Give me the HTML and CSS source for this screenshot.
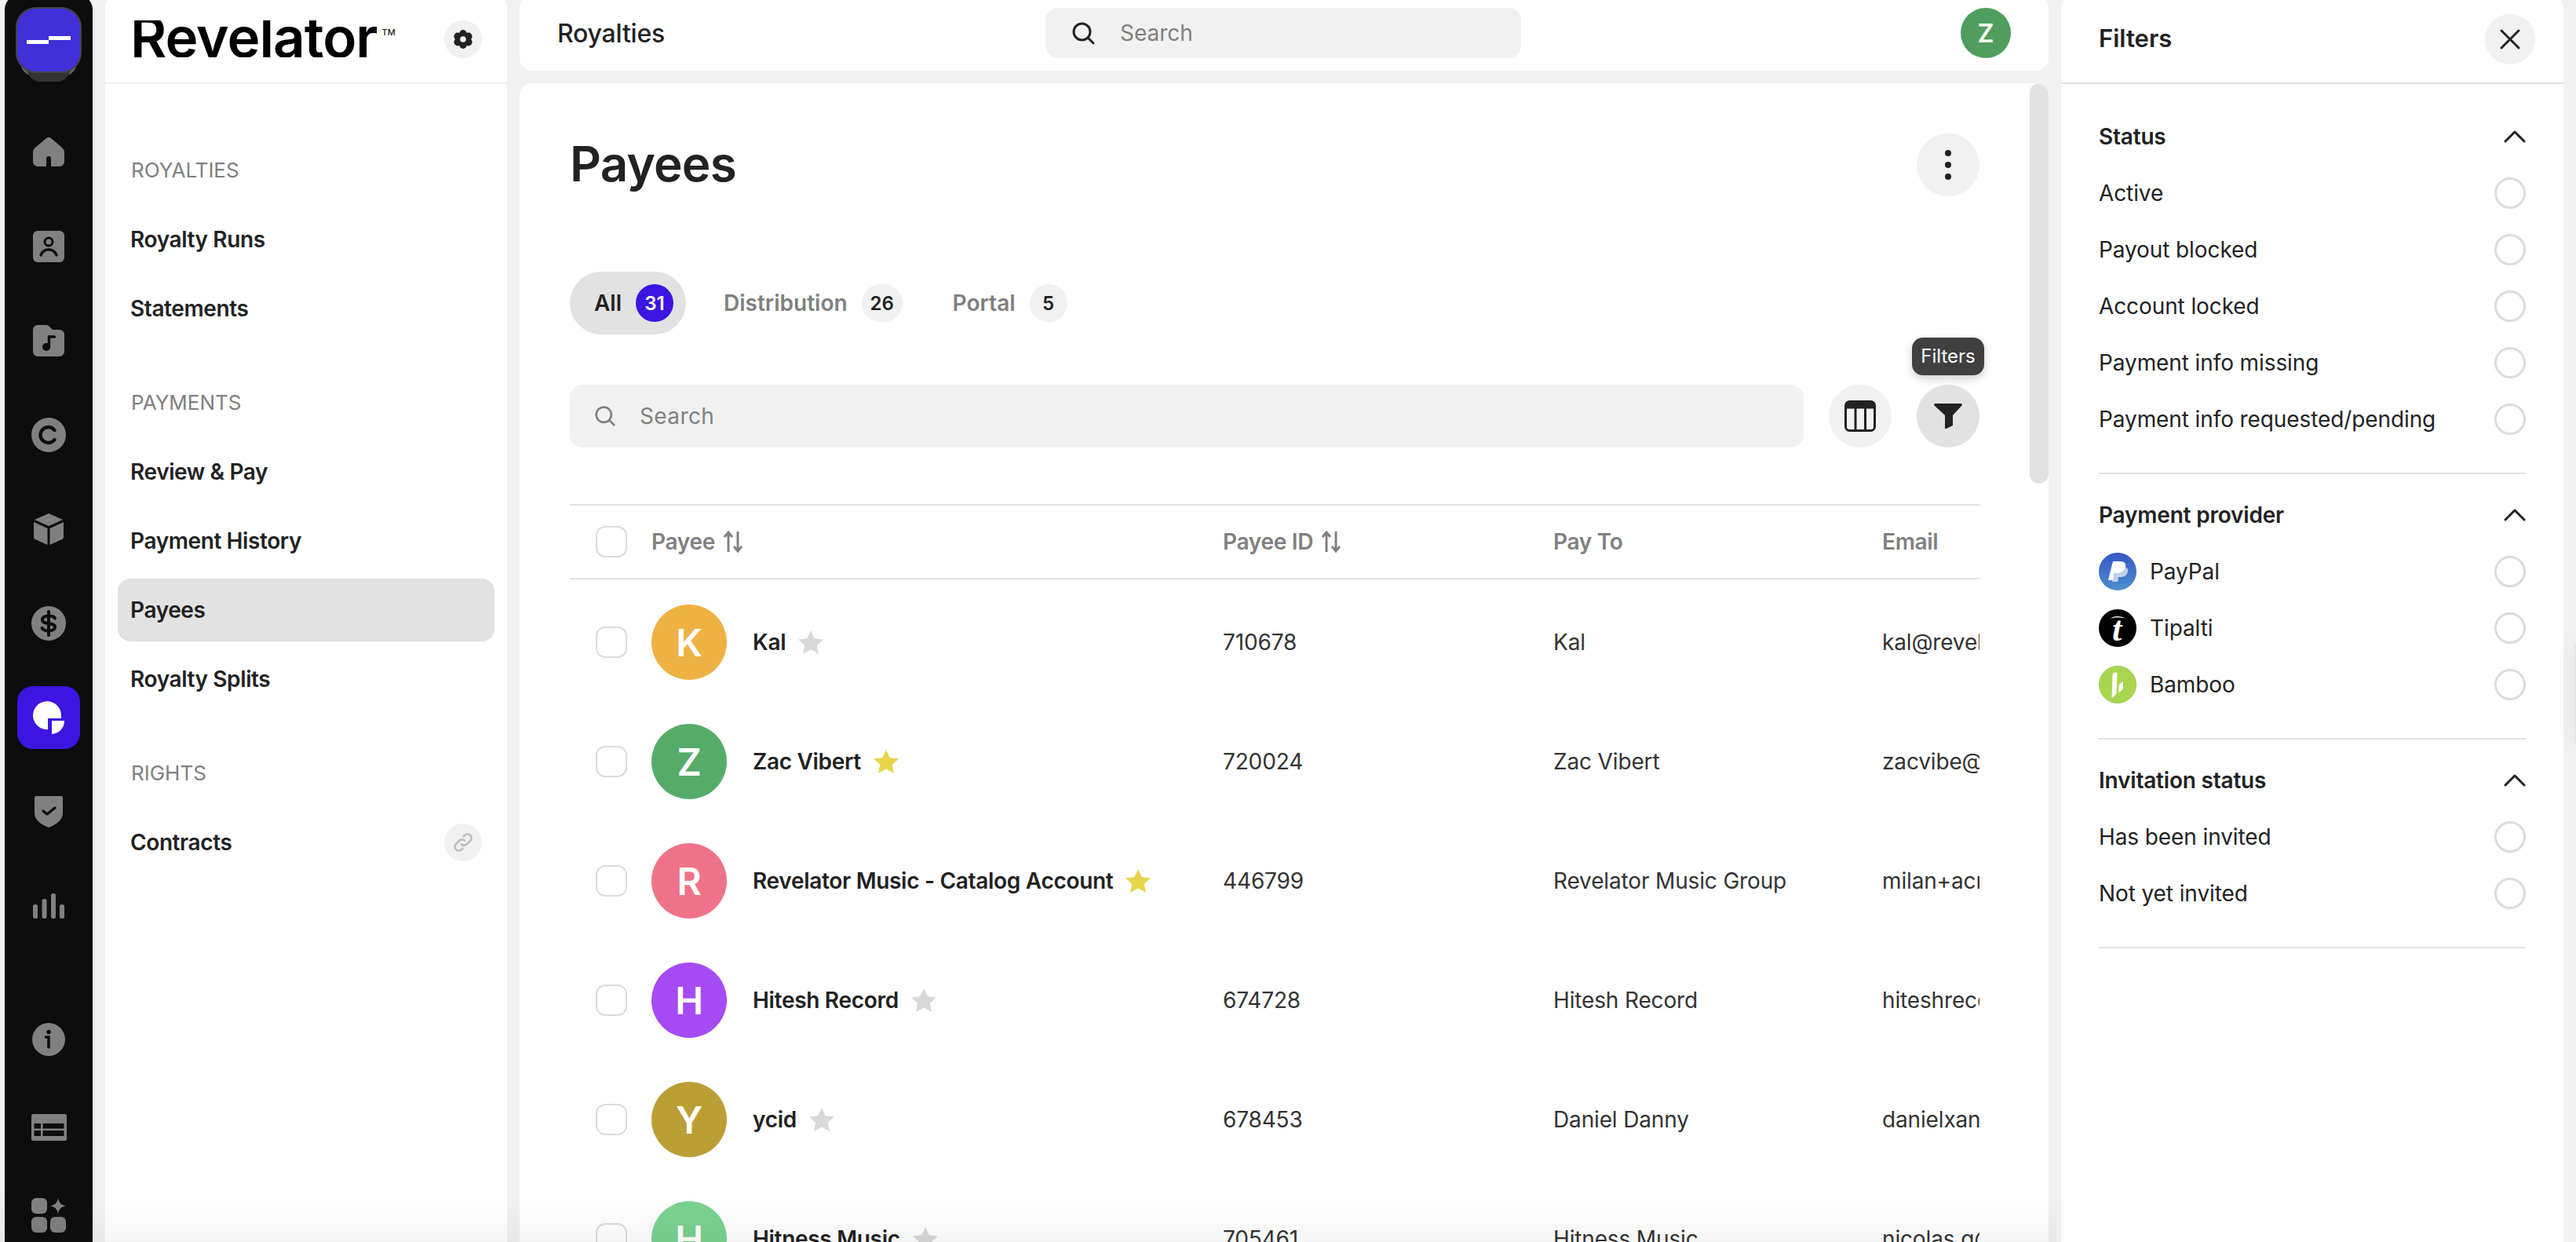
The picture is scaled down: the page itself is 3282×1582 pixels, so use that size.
FILE: index.html
```html
<!DOCTYPE html>
<html lang="en">
<head>
    <meta charset="UTF-8">
    <title>Payees - Revelator</title>
    <link rel="stylesheet" href="styles.css">
</head>
<body>
    <div class="app">
        <!-- Dark icon rail -->
        <aside class="rail">
            <div class="brand">
                <div class="brand-mark">
                    <svg width="56" height="10" viewBox="0 0 56 10"><path d="M0 5h28v5H0zM28 0h28v5H28z" fill="#fff"/></svg>
                </div>
            </div>
            <div class="rail-item">
                <svg class="rail-icon" width="40" height="38" viewBox="0 0 40 38"><path d="M16.5 1.5a5 5 0 0 1 7 0L37 13a8 8 0 0 1 3 6v12a6 6 0 0 1-6 6H23V27a3 3 0 0 0-6 0v10H6a6 6 0 0 1-6-6V19a8 8 0 0 1 3-6z"/></svg>
            </div>
            <div class="rail-item">
                <svg class="rail-icon" width="40" height="40" viewBox="0 0 40 40"><rect width="40" height="40" rx="6"/><circle cx="20" cy="14" r="5" fill="none" stroke="#0d0d0d" stroke-width="3"/><path d="M10 31c2-5 6-7 10-7s8 2 10 7" fill="none" stroke="#0d0d0d" stroke-width="3.4" stroke-linecap="round"/></svg>
            </div>
            <div class="rail-item">
                <svg class="rail-icon" width="40" height="40" viewBox="0 0 40 40"><path d="M6 0h11a6 6 0 0 1 4 2l4 4h9a6 6 0 0 1 6 6v22a6 6 0 0 1-6 6H6a6 6 0 0 1-6-6V6a6 6 0 0 1 6-6z"/><circle cx="17" cy="28" r="5" fill="#0d0d0d"/><path d="M20.5 28V15h7" fill="none" stroke="#0d0d0d" stroke-width="3.4" stroke-linecap="round"/></svg>
            </div>
            <div class="rail-item">
                <svg class="rail-icon" width="44" height="44" viewBox="0 0 44 44"><circle cx="22" cy="22" r="22"/><path d="M29.5 16a10 10 0 1 0 0 12" fill="none" stroke="#0d0d0d" stroke-width="4.4" stroke-linecap="round"/></svg>
            </div>
            <div class="rail-item">
                <svg class="rail-icon" width="38" height="40" viewBox="0 0 38 40"><path d="M19 0l18 8-18 8L1 8zM0 11l17.500 8v21L2 33a3 3 0 0 1-2-3zM38 11l-17.500 8v21L36 33a3 3 0 0 0 2-3z"/></svg>
            </div>
            <div class="rail-item">
                <svg class="rail-icon" width="44" height="44" viewBox="0 0 44 44"><circle cx="22" cy="22" r="22"/><path d="M30 15.500c-1-2-4-3-8-3-5 0-8 2-8 5 0 7 16 2.500 16 9 0 3-3 5-8 5-4 0-7-1-8.500-3.500M22 7v30" fill="none" stroke="#0d0d0d" stroke-width="4" stroke-linecap="round"/></svg>
            </div>
            <div class="rail-item">
                <div class="rail-active">
                    <svg width="40" height="42" viewBox="0 0 40 42"><path d="M36 22H19v14.200A18 18 0 1 1 36 18z" fill="#fff"/><path d="M24 25h16a16.500 16.500 0 0 1-16 17z" fill="#fff"/></svg>
                </div>
            </div>
            <div class="rail-item">
                <svg class="rail-icon" width="36" height="40" viewBox="0 0 36 40"><path d="M2 0h32a2 2 0 0 1 2 2v20c0 8-8 14-18 18C8 36 0 30 0 22V2a2 2 0 0 1 2-2z"/><path d="M11 19l5 4 10-8" fill="none" stroke="#0d0d0d" stroke-width="3.4" stroke-linecap="round" stroke-linejoin="round"/></svg>
            </div>
            <div class="rail-item">
                <svg class="rail-icon" width="40" height="32" viewBox="0 0 40 32"><rect y="14" width="6" height="18" rx="2.500"/><rect x="11.500" y="7" width="6" height="25" rx="2.500"/><rect x="23" width="6" height="32" rx="2.500"/><rect x="34" y="14" width="6" height="18" rx="2.500"/></svg>
            </div>
            <div class="rail-bottom">
                <div class="rail-item rail-item-small">
                    <svg class="rail-icon" width="42" height="42" viewBox="0 0 42 42"><circle cx="21" cy="21" r="21"/><circle cx="21" cy="11.500" r="2.800" fill="#0d0d0d"/><path d="M17.500 18H21v13" fill="none" stroke="#0d0d0d" stroke-width="3.600" stroke-linecap="round"/></svg>
                </div>
                <div class="rail-item rail-item-small">
                    <svg class="rail-icon" width="45" height="34" viewBox="0 0 45 34"><rect width="45" height="34" rx="2"/><path d="M3.500 12h8.500v6.500H3.500zM14.500 12H41.500v6.500H14.500zM3.500 21h8.500v7H3.500zM14.500 21H41.500v7H14.500z" fill="#0d0d0d"/></svg>
                </div>
                <div class="rail-item rail-item-small">
                    <svg class="rail-icon" width="44" height="44" viewBox="0 0 44 44"><rect width="20" height="20" rx="6"/><rect y="24" width="20" height="20" rx="6"/><rect x="24" y="24" width="20" height="20" rx="6"/><path d="M34 0c1 6 4 9 10 10-6 1-9 4-10 10-1-6-4-9-10-10 6-1 9-4 10-10z"/></svg>
                </div>
            </div>
        </aside>

        <!-- Section navigation -->
        <nav class="nav">
            <div class="nav-head">
                <div class="logo"><span class="logo-word">Revelator</span><span class="logo-tm">TM</span></div>
                <button class="nav-round">
                    <svg width="24" height="24" viewBox="0 0 24 24"><g fill="#222"><circle cx="12" cy="4.800" r="4.800"/><circle cx="12" cy="19.200" r="4.800"/><circle cx="5.200" cy="8.400" r="4.800"/><circle cx="18.800" cy="8.400" r="4.800"/><circle cx="5.200" cy="15.600" r="4.800"/><circle cx="18.800" cy="15.600" r="4.800"/></g><circle cx="12" cy="12" r="3.800" fill="#f1f1f1"/></svg>
                </button>
            </div>
            <div class="nav-body">
                <div class="nav-section">
                    <div class="nav-label">ROYALTIES</div>
                    <a class="nav-item">Royalty Runs</a>
                    <a class="nav-item">Statements</a>
                </div>
                <div class="nav-section">
                    <div class="nav-label">PAYMENTS</div>
                    <a class="nav-item">Review &amp; Pay</a>
                    <a class="nav-item">Payment History</a>
                    <a class="nav-item selected">Payees</a>
                    <a class="nav-item">Royalty Splits</a>
                </div>
                <div class="nav-section">
                    <div class="nav-label">RIGHTS</div>
                    <a class="nav-item">Contracts
                        <span class="nav-round">
                            <svg width="26" height="26" viewBox="0 0 24 24" fill="none" stroke="#bdbdbd" stroke-width="2.400" stroke-linecap="round"><path d="M10 14a4.500 4.500 0 0 0 6.500 0l4-4A4.600 4.600 0 0 0 14 3.500l-1.500 1.500"/><path d="M14 10a4.500 4.500 0 0 0-6.500 0l-4 4a4.600 4.600 0 0 0 6.500 6.500l1.500-1.500"/></svg>
                        </span>
                    </a>
                </div>
            </div>
        </nav>

        <main class="main">
            <header class="topbar">
                <div class="topbar-title">Royalties</div>
                <div class="search top-search">
                    <svg width="32" height="32" viewBox="0 0 32 32" fill="none" stroke="#222" stroke-width="3" stroke-linecap="round"><circle cx="14.500" cy="14.500" r="10.500"/><path d="M22 22l7 7"/></svg>
                    <span class="search-text">Search</span>
                </div>
                <div class="user-avatar">Z</div>
            </header>

            <section class="content">
                <div class="scroll-thumb"></div>
                <div class="title-row">
                    <h1>Payees</h1>
                    <button class="round-btn">
                        <svg width="8" height="38" viewBox="0 0 8 38" fill="#222"><circle cx="4" cy="4" r="4"/><circle cx="4" cy="19" r="4"/><circle cx="4" cy="34" r="4"/></svg>
                    </button>
                </div>

                <div class="tabs">
                    <div class="tab active">All <span class="count">31</span></div>
                    <div class="tab">Distribution <span class="count wide">26</span></div>
                    <div class="tab">Portal <span class="count">5</span></div>
                </div>

                <div class="toolbar">
                    <div class="search table-search">
                        <svg width="28" height="28" viewBox="0 0 32 32" fill="none" stroke="#808080" stroke-width="3" stroke-linecap="round"><circle cx="14" cy="14" r="11"/><path d="M22 22l7 7"/></svg>
                        <span class="search-text">Search</span>
                    </div>
                    <button class="round-btn">
                        <svg width="40" height="40" viewBox="0 0 40 40" fill="none" stroke="#222"><rect x="1.500" y="1.500" width="37" height="37" rx="5" stroke-width="3"/><path d="M1.500 6.500h37" stroke-width="8"/><path d="M14 8v30M26.500 8v30" stroke-width="3"/></svg>
                    </button>
                    <button class="round-btn on">
                        <svg width="36" height="32" viewBox="0 0 36 32" fill="#222"><path d="M1.500 0h33a1.500 1.500 0 0 1 1 2.500L24 15v12a2 2 0 0 1-1 1.500L15.500 32a1 1 0 0 1-1.500-1V15L.5 2.500A1.500 1.500 0 0 1 1.500 0z"/></svg>
                        <span class="tooltip">Filters</span>
                    </button>
                </div>

                <div class="table">
                    <div class="table-row table-head">
                        <div class="cell-check"><span class="checkbox"></span></div>
                        <div class="cell-sort">Payee
                            <svg class="sort" width="26" height="28" viewBox="0 0 26 28" fill="none" stroke="#808080" stroke-width="3"><path d="M7 27V3M2 8l5-6 5 6M19 1v24M14 20l5 6 5-6"/></svg>
                        </div>
                        <div class="cell-sort">Payee ID
                            <svg class="sort" width="26" height="28" viewBox="0 0 26 28" fill="none" stroke="#808080" stroke-width="3"><path d="M7 27V3M2 8l5-6 5 6M19 1v24M14 20l5 6 5-6"/></svg>
                        </div>
                        <div>Pay To</div>
                        <div>Email</div>
                    </div>

                    <div class="table-row first">
                        <div class="cell-check"><span class="checkbox"></span></div>
                        <div class="cell-payee"><span class="avatar orange">K</span><span class="payee-name">Kal</span>
                            <svg class="star" width="32" height="30" viewBox="0 0 32 30"><path class="star-off" d="M16 0l4.800 10.200 11.200 1.300-8.300 7.600 2.300 10.900-10-5.600L6 30l2.300-10.900L0 11.500l11.200-1.300z"/></svg>
                        </div>
                        <div>710678</div>
                        <div>Kal</div>
                        <div>kal@revelator.com</div>
                    </div>
                    <div class="table-row">
                        <div class="cell-check"><span class="checkbox"></span></div>
                        <div class="cell-payee"><span class="avatar green">Z</span><span class="payee-name">Zac Vibert</span>
                            <svg class="star" width="32" height="30" viewBox="0 0 32 30"><path class="star-on" d="M16 0l4.800 10.200 11.200 1.300-8.300 7.600 2.300 10.900-10-5.600L6 30l2.300-10.900L0 11.500l11.200-1.300z"/></svg>
                        </div>
                        <div>720024</div>
                        <div>Zac Vibert</div>
                        <div>zacvibe@revelator.com</div>
                    </div>
                    <div class="table-row">
                        <div class="cell-check"><span class="checkbox"></span></div>
                        <div class="cell-payee"><span class="avatar pink">R</span><span class="payee-name">Revelator Music - Catalog Account</span>
                            <svg class="star" width="32" height="30" viewBox="0 0 32 30"><path class="star-on" d="M16 0l4.800 10.200 11.200 1.300-8.300 7.600 2.300 10.900-10-5.600L6 30l2.300-10.900L0 11.500l11.200-1.300z"/></svg>
                        </div>
                        <div>446799</div>
                        <div>Revelator Music Group</div>
                        <div>milan+acr@revelator.com</div>
                    </div>
                    <div class="table-row">
                        <div class="cell-check"><span class="checkbox"></span></div>
                        <div class="cell-payee"><span class="avatar purple">H</span><span class="payee-name">Hitesh Record</span>
                            <svg class="star" width="32" height="30" viewBox="0 0 32 30"><path class="star-off" d="M16 0l4.800 10.200 11.200 1.300-8.300 7.600 2.300 10.900-10-5.600L6 30l2.300-10.900L0 11.500l11.200-1.300z"/></svg>
                        </div>
                        <div>674728</div>
                        <div>Hitesh Record</div>
                        <div>hiteshrecord@revelator.com</div>
                    </div>
                    <div class="table-row">
                        <div class="cell-check"><span class="checkbox"></span></div>
                        <div class="cell-payee"><span class="avatar mustard">Y</span><span class="payee-name">ycid</span>
                            <svg class="star" width="32" height="30" viewBox="0 0 32 30"><path class="star-off" d="M16 0l4.800 10.200 11.200 1.300-8.300 7.600 2.300 10.900-10-5.600L6 30l2.300-10.900L0 11.500l11.200-1.300z"/></svg>
                        </div>
                        <div>678453</div>
                        <div>Daniel Danny</div>
                        <div>danielxan@revelator.com</div>
                    </div>
                    <div class="table-row">
                        <div class="cell-check"><span class="checkbox"></span></div>
                        <div class="cell-payee"><span class="avatar mint">H</span><span class="payee-name">Hitness Music</span>
                            <svg class="star" width="32" height="30" viewBox="0 0 32 30"><path class="star-off" d="M16 0l4.800 10.200 11.200 1.300-8.300 7.600 2.300 10.900-10-5.600L6 30l2.300-10.900L0 11.500l11.200-1.300z"/></svg>
                        </div>
                        <div>705461</div>
                        <div>Hitness Music</div>
                        <div>nicolas.g@revelator.com</div>
                    </div>
                </div>
            </section>
        </main>

        <!-- Filters drawer -->
        <aside class="filters">
            <div class="filters-head">
                <div class="filters-title">Filters</div>
                <button class="close-btn">
                    <svg width="28" height="28" viewBox="0 0 28 28" stroke="#222" stroke-width="3" stroke-linecap="round"><path d="M3 3l22 22M25 3L3 25"/></svg>
                </button>
            </div>
            <div class="filters-body">
                <div class="filter-group">
                    <div class="filter-group-head">Status
                        <svg width="28" height="16" viewBox="0 0 28 16" fill="none" stroke="#222" stroke-width="3" stroke-linecap="round" stroke-linejoin="round"><path d="M2 14L14 2l12 12"/></svg>
                    </div>
                    <div class="filter-option">Active <span class="radio"></span></div>
                    <div class="filter-option">Payout blocked <span class="radio"></span></div>
                    <div class="filter-option">Account locked <span class="radio"></span></div>
                    <div class="filter-option">Payment info missing <span class="radio"></span></div>
                    <div class="filter-option">Payment info requested/pending <span class="radio"></span></div>
                </div>
                <div class="filter-group">
                    <div class="filter-group-head">Payment provider
                        <svg width="28" height="16" viewBox="0 0 28 16" fill="none" stroke="#222" stroke-width="3" stroke-linecap="round" stroke-linejoin="round"><path d="M2 14L14 2l12 12"/></svg>
                    </div>
                    <div class="filter-option">
                        <span class="provider">
                            <svg width="48" height="48" viewBox="0 0 48 48"><defs><linearGradient id="pp" x1="0" y1="0" x2="0" y2="1"><stop offset="0" stop-color="#3557c4"/><stop offset="1" stop-color="#4d8fd0"/></linearGradient></defs><circle cx="24" cy="24" r="24" fill="url(#pp)"/><path d="M23 18h7c5 0 8 2 7 6-1 5-5 7-9 7h-3l-1 6h-7z" fill="#fff" opacity=".65"/><path d="M18 11h9c6 0 8 3 7 7-1 5-6 8-10 8h-4l-2 9h-6z" fill="#fff"/></svg>
                            PayPal
                        </span>
                        <span class="radio"></span>
                    </div>
                    <div class="filter-option">
                        <span class="provider">
                            <svg width="48" height="48" viewBox="0 0 48 48"><circle cx="24" cy="24" r="24" fill="#000"/><path d="M14 12c6-4 14-4 20 0-6-2-14-2-20 0z" fill="#fff"/><text class="tipalti-t" x="23" y="40" text-anchor="middle">t</text></svg>
                            Tipalti
                        </span>
                        <span class="radio"></span>
                    </div>
                    <div class="filter-option">
                        <span class="provider">
                            <svg width="48" height="48" viewBox="0 0 48 48"><circle cx="24" cy="24" r="23.500" fill="#a8d64e" stroke="#9cc94a"/><path d="M17.500 12c0-3 5.500-5 6-2l-1 25c-1 2-3 5-6 6z" fill="#fff"/><path d="M31 20v8c0 2-3 5-6 6l1-10c1-2 3-3 5-4z" fill="#fff"/></svg>
                            Bamboo
                        </span>
                        <span class="radio"></span>
                    </div>
                </div>
                <div class="filter-group">
                    <div class="filter-group-head">Invitation status
                        <svg width="28" height="16" viewBox="0 0 28 16" fill="none" stroke="#222" stroke-width="3" stroke-linecap="round" stroke-linejoin="round"><path d="M2 14L14 2l12 12"/></svg>
                    </div>
                    <div class="filter-option">Has been invited <span class="radio"></span></div>
                    <div class="filter-option">Not yet invited <span class="radio"></span></div>
                </div>
            </div>
        </aside>
    </div>

    <div class="edge-handle"></div>
    <div class="bottom-fade"></div>
</body>
</html>
```

FILE: styles.css
```css
* {
    box-sizing: border-box;
}

body {
    margin: 0;
    height: 100vh;
    overflow: hidden;
    background: #f1f1f1;
    color: #222;
    font-family: Inter, "Liberation Sans", sans-serif;
    font-size: 28px;
}

button {
    border: none;
    padding: 0;
    font-family: inherit;
}

.app {
    display: flex;
    gap: 16px;
    height: 100vh;
    padding-left: 6px;
}

/* Icon rail */
.rail {
    display: flex;
    flex-direction: column;
    align-items: center;
    flex: none;
    width: 112px;
    height: calc(100vh + 6px);
    margin-top: -6px;
    padding-top: 15px;
    background: #0d0d0d;
    border-radius: 18px 18px 0 0;
}

.brand {
    position: relative;
    flex: none;
    width: 84px;
    height: 89px;
    margin-bottom: 36px;
}

.brand::before,
.brand::after {
    content: "";
    position: absolute;
    border-radius: 0 0 18px 18px;
}

.brand::before {
    left: 6px;
    right: 6px;
    bottom: 1px;
    height: 60px;
    background: #666;
}

.brand::after {
    left: 14px;
    right: 14px;
    bottom: -6px;
    height: 30px;
    background: #333;
    z-index: 0;
}

.brand-mark {
    position: relative;
    z-index: 1;
    display: flex;
    align-items: center;
    justify-content: center;
    width: 84px;
    height: 84px;
    background: #4030d8;
    border: 2px solid #444;
    border-radius: 26px;
}

.rail-item {
    display: flex;
    align-items: center;
    justify-content: center;
    flex: none;
    height: 120px;
}

.rail-item-small {
    height: 112px;
}

.rail-icon {
    fill: #808080;
}

.rail-active {
    display: flex;
    align-items: center;
    justify-content: center;
    width: 80px;
    height: 80px;
    background: #3d14e0;
    border-radius: 20px;
}

.rail-bottom {
    flex: none;
    margin-top: 54px;
}

/* Section nav */
.nav {
    flex: none;
    width: 512px;
    height: calc(100vh + 6px);
    margin-top: -6px;
    background: #fff;
    border-radius: 16px 16px 0 0;
}

.nav-head {
    display: flex;
    align-items: center;
    justify-content: space-between;
    height: 113px;
    padding: 0 32px;
    border-bottom: 2px solid #f1f1f1;
}

.logo {
    display: flex;
    align-items: flex-start;
    height: 47px;
    overflow: hidden;
}

.logo-word {
    margin-top: -14px;
    color: #000;
    font-size: 71px;
    font-weight: 600;
    line-height: 70px;
    letter-spacing: -1px;
}

.logo-tm {
    margin: 8px 0 0 6px;
    font-size: 11px;
    font-weight: 500;
}

.nav-round {
    display: flex;
    align-items: center;
    justify-content: center;
    flex: none;
    width: 48px;
    height: 48px;
    background: #f1f1f1;
    border-radius: 50%;
}

.nav-body {
    padding: 94px 16px 0;
}

.nav-section {
    display: flex;
    flex-direction: column;
    gap: 8px;
    margin-bottom: 64px;
}

.nav-label {
    height: 32px;
    margin-bottom: 24px;
    padding-left: 17px;
    color: #808080;
    font-size: 26px;
    line-height: 32px;
}

.nav-item {
    display: flex;
    align-items: center;
    justify-content: space-between;
    height: 80px;
    padding: 0 16px;
    font-weight: 600;
    letter-spacing: -0.4px;
    border-radius: 16px;
}

.nav-item.selected {
    background: #e2e2e2;
}

/* Main column */
.main {
    display: flex;
    flex-direction: column;
    flex: none;
    gap: 16px;
    width: 1948px;
    height: calc(100vh + 6px);
    margin-top: -6px;
}

.topbar {
    display: grid;
    grid-template-columns: 622px 606px 1fr;
    align-items: center;
    flex: none;
    height: 96px;
    padding: 0 48px;
    background: #fff;
    border-radius: 16px;
}

.topbar-title {
    font-size: 32px;
    font-weight: 500;
    letter-spacing: -0.2px;
}

.search {
    display: flex;
    align-items: center;
    background: #f1f1f1;
    border-radius: 16px;
}

.search-text {
    color: #808080;
}

.top-search {
    gap: 31px;
    height: 64px;
    padding-left: 32px;
}

.user-avatar {
    display: flex;
    align-items: center;
    justify-content: center;
    justify-self: end;
    width: 64px;
    height: 64px;
    background: #4f9e5f;
    color: #fff;
    font-size: 32px;
    font-weight: 600;
    border-radius: 50%;
}

.content {
    position: relative;
    flex: 1;
    min-height: 0;
    overflow: hidden;
    padding: 64px 88px 0 64px;
    background: #fff;
    border-radius: 16px 16px 0 0;
}

.scroll-thumb {
    position: absolute;
    top: 0;
    right: 0;
    width: 24px;
    height: 510px;
    background: #e2e2e2;
    border-radius: 12px;
}

.title-row {
    display: flex;
    align-items: center;
    justify-content: space-between;
}

h1 {
    margin: -4px 0 0;
    font-size: 62px;
    font-weight: 600;
    letter-spacing: -0.8px;
}

.round-btn {
    position: relative;
    display: flex;
    align-items: center;
    justify-content: center;
    flex: none;
    width: 80px;
    height: 80px;
    background: #f1f1f1;
    border-radius: 50%;
}

.round-btn.on {
    background: #e2e2e2;
}

.tooltip {
    position: absolute;
    bottom: 92px;
    left: -6px;
    width: 92px;
    height: 48px;
    background: #404040;
    color: #fff;
    font-size: 24px;
    line-height: 48px;
    text-align: center;
    border-radius: 14px;
    box-shadow: 0 4px 12px rgba(0, 0, 0, 0.2);
}

.tabs {
    display: flex;
    gap: 17px;
    margin-top: 96px;
}

.tab {
    display: flex;
    align-items: center;
    gap: 18px;
    height: 80px;
    padding: 0 16px 0 31px;
    color: #808080;
    font-weight: 600;
    border-radius: 40px;
}

.tab.active {
    background: #e2e2e2;
    color: #222;
}

.count {
    display: flex;
    align-items: center;
    justify-content: center;
    width: 48px;
    height: 48px;
    background: #f1f1f1;
    color: #222;
    font-size: 24px;
    font-weight: 600;
    border-radius: 24px;
}

.count.wide {
    width: 52px;
}

.tab.active .count {
    background: #3d14e0;
    color: #fff;
}

.toolbar {
    display: flex;
    align-items: center;
    gap: 32px;
    margin-top: 64px;
}

.table-search {
    flex: 1;
    gap: 30px;
    height: 80px;
    padding-left: 31px;
}

.table-search .search-text {
    letter-spacing: 0.4px;
}

.table {
    margin-top: 72px;
    overflow: hidden;
}

.table-row {
    display: grid;
    grid-template-columns: 104px 728px 421px 419px 1fr;
    align-items: center;
    height: 152px;
    color: #333;
    letter-spacing: -0.15px;
    white-space: nowrap;
}

.table-row.first {
    margin-top: 4px;
}

.table-head {
    height: 96px;
    color: #808080;
    font-weight: 600;
    letter-spacing: -0.3px;
    border-top: 2px solid #e2e2e2;
    border-bottom: 2px solid #e2e2e2;
}

.cell-check {
    padding-left: 33px;
    line-height: 0;
}

.checkbox {
    display: inline-block;
    width: 40px;
    height: 40px;
    background: #fff;
    border: 2px solid #dcdcdc;
    border-radius: 12px;
}

.cell-sort {
    display: flex;
    align-items: center;
    gap: 10px;
}

.cell-payee {
    display: flex;
    align-items: center;
}

.avatar {
    display: flex;
    align-items: center;
    justify-content: center;
    flex: none;
    width: 96px;
    height: 96px;
    margin-right: 33px;
    color: #fff;
    font-size: 48px;
    font-weight: 600;
    border-radius: 50%;
}

.orange { background: #eeb244; }
.green { background: #55ab6a; }
.pink { background: #ef7388; }
.purple { background: #a64bf4; }
.mustard { background: #bb9f35; }
.mint { background: #7ad291; }

.payee-name {
    margin-right: 16px;
    color: #222;
    font-weight: 600;
    letter-spacing: -0.3px;
}

.star-on {
    fill: #e8d54a;
}

.star-off {
    fill: #d8d8d8;
}

/* Filters drawer */
.filters {
    flex: none;
    width: 640px;
    height: calc(100vh + 6px);
    margin-top: -6px;
    background: #fff;
    border-radius: 16px 16px 0 0;
}

.filters-head {
    display: flex;
    align-items: center;
    justify-content: space-between;
    height: 113px;
    padding: 0 36px 0 48px;
    border-bottom: 2px solid #e2e2e2;
}

.filters-title {
    margin-bottom: 2px;
    font-size: 31px;
    font-weight: 600;
}

.close-btn {
    display: flex;
    align-items: center;
    justify-content: center;
    width: 64px;
    height: 64px;
    background: #f1f1f1;
    border-radius: 50%;
}

.filters-body {
    padding: 15px 48px 0;
}

.filter-group {
    padding: 16px 0 32px;
    border-bottom: 2px solid #e2e2e2;
}

.filter-group-head {
    display: flex;
    align-items: center;
    justify-content: space-between;
    height: 72px;
    font-weight: 600;
    letter-spacing: -0.2px;
}

.filter-option {
    display: flex;
    align-items: center;
    justify-content: space-between;
    height: 72px;
    letter-spacing: -0.1px;
}

.provider {
    display: flex;
    align-items: center;
    gap: 17px;
}

.tipalti-t {
    fill: #fff;
    font-family: "Liberation Serif", serif;
    font-size: 44px;
    font-style: italic;
    font-weight: 700;
}

.radio {
    flex: none;
    width: 40px;
    height: 40px;
    border: 3px solid #dcdcdc;
    border-radius: 50%;
}

/* Things that lie over the page */
.edge-handle {
    position: absolute;
    top: 816px;
    right: -14px;
    width: 16px;
    height: 134px;
    background: #e5e5e5;
    border-radius: 8px;
    box-shadow: 0 0 24px rgba(0, 0, 0, 0.06);
}

.bottom-fade {
    position: absolute;
    left: 0;
    right: 662px;
    bottom: 0;
    height: 60px;
    background: linear-gradient(rgba(0, 0, 0, 0), rgba(0, 0, 0, 0.04));
    pointer-events: none;
}
```
